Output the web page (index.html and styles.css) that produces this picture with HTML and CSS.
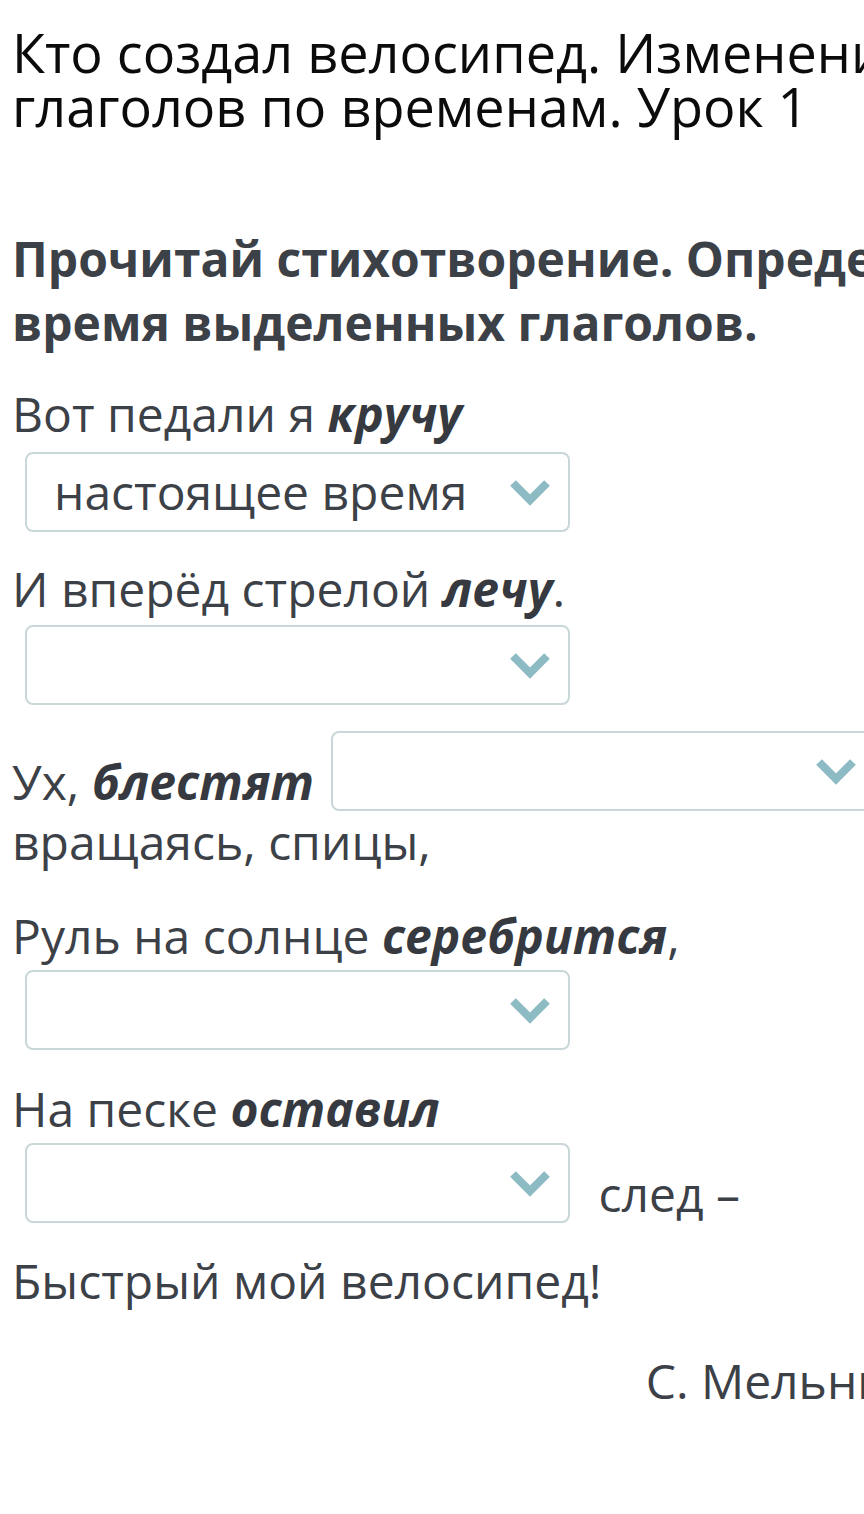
FILE: index.html
```html
<!DOCTYPE html>
<html lang="ru">
<head>
<meta charset="utf-8">
<title>Кто создал велосипед</title>
<link rel="stylesheet" href="styles.css">
</head>
<body>
<div class="page">
  <h1 class="title">Кто создал велосипед. Изменение глаголов по временам. Урок 1</h1>
  <h2 class="task">Прочитай стихотворение. Определи время выделенных глаголов.</h2>
  <div class="poem">
    <p class="line l1">Вот педали я <em>кручу</em></p>
    <div class="select block s1">
      <span class="value">настоящее время</span>
      <svg class="chev" viewBox="0 0 44 28" width="44" height="28"><polyline points="5,5 22,22 39,5" /></svg>
    </div>
    <p class="line l2">И вперёд стрелой <em>лечу</em>.</p>
    <div class="select block s2">
      <span class="value"></span>
      <svg class="chev" viewBox="0 0 44 28" width="44" height="28"><polyline points="5,5 22,22 39,5" /></svg>
    </div>
    <p class="line l3">Ух, <em>блестят</em> <span class="select inline after"><span class="value"></span><svg class="chev" viewBox="0 0 44 28" width="44" height="28"><polyline points="5,5 22,22 39,5" /></svg></span><br>вращаясь, спицы,</p>
    <p class="line l4">Руль на солнце <em>серебрится</em>,</p>
    <div class="select block s4">
      <span class="value"></span>
      <svg class="chev" viewBox="0 0 44 28" width="44" height="28"><polyline points="5,5 22,22 39,5" /></svg>
    </div>
    <p class="line l5">На песке <em>оставил</em></p>
    <p class="line l6"><span class="select inline lead"><span class="value"></span><svg class="chev" viewBox="0 0 44 28" width="44" height="28"><polyline points="5,5 22,22 39,5" /></svg></span> след –</p>
    <p class="line l7">Быстрый мой велосипед!</p>
    <p class="author">С. Мельников</p>
  </div>
</div>
</body>
</html>
```
FILE: styles.css
```css
html, body {
  margin: 0;
  padding: 0;
  background: #ffffff;
  overflow: hidden;
}
body {
  width: 864px;
  height: 1514px;
}
.page {
  width: 957px;
  padding: 0 0 0 12px;
  font-family: "Open Sans", "Noto Sans", sans-serif;
  color: #3c4047;
}
.title {
  margin: 25px 0 0;
  font-size: 54px;
  line-height: 54px;
  font-weight: 400;
  color: #0b0b0b;
}
.task {
  margin: 94px 0 0;
  font-size: 48px;
  line-height: 64px;
  font-weight: 700;
  color: #3c4047;
}
.poem {
  font-size: 48px;
  line-height: 56px;
}
.line {
  margin: 0;
}
.line em {
  font-style: italic;
  font-weight: 700;
  color: #363a40;
}
.l1 { margin-top: 31px; }
.l2 { margin-top: 29px; }
.l3 { margin-top: 26px; }
.l4 { margin-top: 38px; }
.l5 { margin-top: 31px; }
.l6 { margin-top: 6px; }
.l7 { margin-top: 27px; }
.select {
  box-sizing: border-box;
  width: 545px;
  height: 80px;
  border: 2px solid #c9d7d9;
  border-radius: 8px;
  background: #ffffff;
  display: flex;
  align-items: center;
  justify-content: space-between;
  padding: 0 16px 0 27px;
}
.select.block {
  margin: 10px 0 0 13px;
}
.select.s2 { margin-top: 8px; }
.select.s4 { margin-top: 6px; }
.select.inline {
  display: inline-flex;
  vertical-align: text-bottom;
  margin-bottom: 3px;
}
.select.after {
  margin-left: 5px;
}
.select.lead {
  margin-left: 13px;
  margin-right: 16px;
}
.value {
  color: #3c4047;
  line-height: 1;
}
.chev {
  display: block;
  flex: none;
}
.chev polyline {
  fill: none;
  stroke: #8dbbc4;
  stroke-width: 8;
  stroke-linejoin: miter;
}
.author {
  margin: 44px 0 0;
  text-align: right;
}
```
